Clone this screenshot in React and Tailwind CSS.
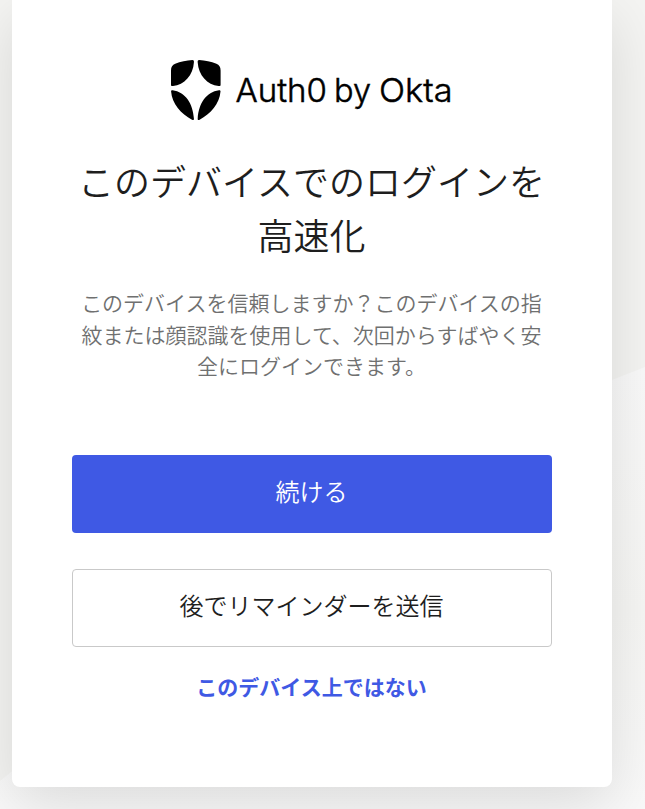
import React from "react";

function Logo() {
  return (
    <svg className="mr-0.5" width="282" height="64" viewBox="170 58 282 64" role="img" aria-label="Auth0 by Okta">
      <g fill="#000">
        <path d="M192.4 60C194 60 194 61 193.9 62.4C193.2 75 184.3 84.8 173 86.1C171.4 86.2 171 85.8 171 84.7V70.4C171 67 172.4 65 175.2 63.8C180.4 61.6 186.6 60.4 192.4 60Z" />
        <path d="M199.2 60C197.6 60 197.6 61 197.7 62.4C198.4 75 207.3 84.8 218.6 86.1C220.2 86.2 220.6 85.8 220.6 84.7V70.4C220.6 67 219.2 65 216.4 63.8C211.2 61.6 205 60.4 199.2 60Z" />
        <path d="M172.6 90.2C171.3 90.1 171 90.7 171.1 91.6C172 104 181 113.8 192 119.7C193.5 120.4 194 119.9 193.9 118.4C193 103.4 185.2 91.8 172.6 90.2Z" />
        <path d="M219 90.2C220.3 90.1 220.6 90.7 220.5 91.6C219.6 104 210.6 113.8 199.6 119.7C198.1 120.4 197.6 119.9 197.7 118.4C198.6 103.4 206.4 91.8 219 90.2Z" />
      </g>
      <g className="font-['Inter'] font-[350]" fontSize="33" stroke="#000" strokeWidth="0.5">
        <text x="235.5" y="102" textLength="91.5" lengthAdjust="spacingAndGlyphs">Auth0</text>
        <text x="334" y="102" textLength="37" lengthAdjust="spacingAndGlyphs">by</text>
        <text x="379" y="102" textLength="73.5" lengthAdjust="spacingAndGlyphs">Okta</text>
      </g>
    </svg>
  );
}

function Backdrop() {
  return (
    <svg className="absolute inset-0" width="645" height="809" viewBox="0 0 645 809" aria-hidden="true">
      <defs>
        <linearGradient id="facet" x1="0" y1="0" x2="0" y2="1">
          <stop offset="0" stopColor="#f9f9f9" />
          <stop offset="0.55" stopColor="#f6f6f4" />
          <stop offset="1" stopColor="#f9f9f9" />
        </linearGradient>
      </defs>
      <rect width="645" height="809" fill="#f4f4f2" />
      <path d="M0 781L300 540L612 380L645 367V809H0Z" fill="url(#facet)" />
    </svg>
  );
}

export default function App() {
  return (
    <div className="relative h-[809px] w-[645px] overflow-hidden bg-[#f4f4f2] font-['Noto_Sans_CJK_JP',sans-serif]">
      <Backdrop />
      <main className="relative ml-3 flex h-[787px] w-[600px] flex-col items-center rounded-b-lg bg-white px-[60px] pt-[58px] text-center shadow-[0_18px_60px_rgba(0,0,0,0.12)]">
        <Logo />
        <h1 className="mt-[31px] mr-px text-[36px] leading-[54px] font-[350] whitespace-nowrap text-[#1e1e1e]">
          このデバイスでのログインを
          <br />
          高速化
        </h1>
        <p className="mt-[26px] mr-px text-[21px] leading-[31.5px] font-[350] whitespace-nowrap text-[#6f7070]">
          このデバイスを信頼しますか？このデバイスの指
          <br />
          紋または顔認識を使用して、次回からすばやく安
          <br />
          全にログインできます。
        </p>
        <button className="mt-[73px] h-[78px] w-full shrink-0 rounded-[4px] bg-[#3f59e4] pr-px pb-1.5 text-2xl font-[350] text-white">
          続ける
        </button>
        <button className="mt-[36px] h-[78px] w-full shrink-0 rounded-[4px] border border-[#c9c9c9] pr-px pb-1.5 text-2xl font-[350] text-[#1e1e1e]">
          後でリマインダーを送信
        </button>
        <a href="#" className="mt-[23px] mr-px text-[21px] leading-[32px] font-bold text-[#3f59e4]">
          このデバイス上ではない
        </a>
      </main>
    </div>
  );
}
